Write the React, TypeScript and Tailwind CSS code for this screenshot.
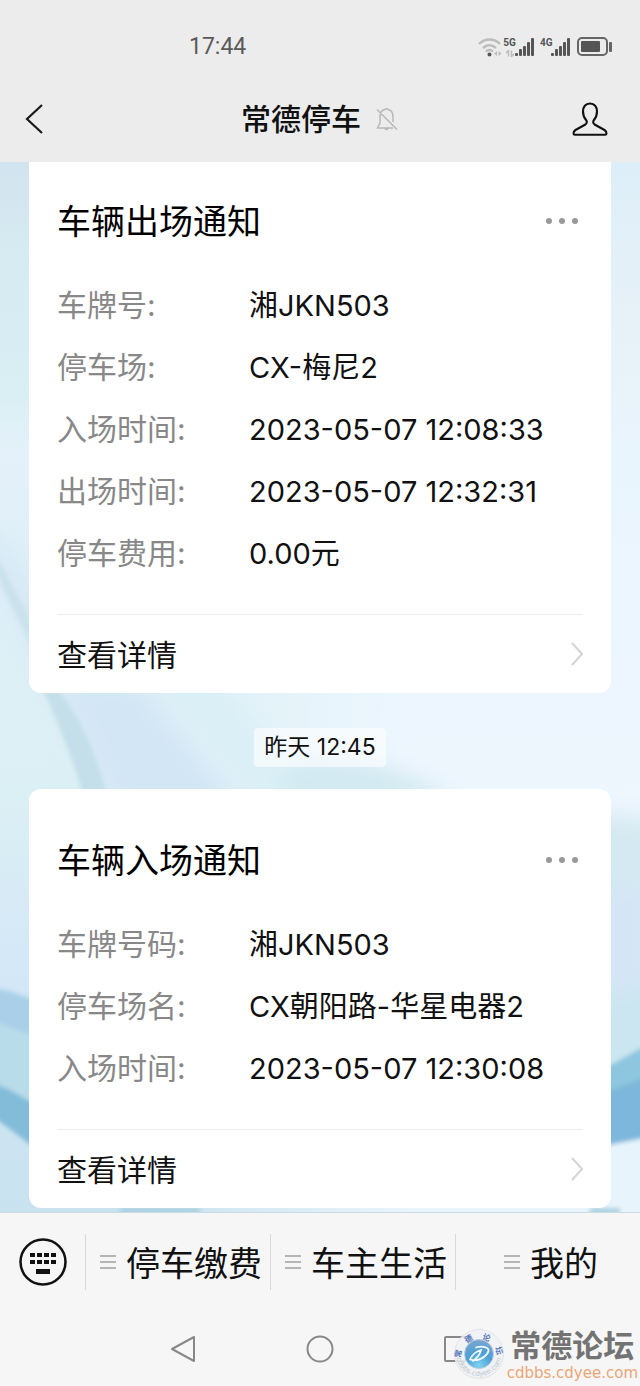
import React from 'react';

const SANS = "font-['Inter','Noto_Sans_CJK_SC',sans-serif]";

type Field = { label: string; value: string };

const exitFields: Field[] = [
    { label: '车牌号:', value: '湘JKN503' },
    { label: '停车场:', value: 'CX-梅尼2' },
    { label: '入场时间:', value: '2023-05-07 12:08:33' },
    { label: '出场时间:', value: '2023-05-07 12:32:31' },
    { label: '停车费用:', value: '0.00元' },
];

const entryFields: Field[] = [
    { label: '车牌号码:', value: '湘JKN503' },
    { label: '停车场名:', value: 'CX朝阳路-华星电器2' },
    { label: '入场时间:', value: '2023-05-07 12:30:08' },
];

const menuItems = ['停车缴费', '车主生活', '我的'];

const SignalBars: React.FC = () => (
    <svg width="19" height="18" viewBox="0 0 19 18" fill="#555">
        <rect x="0" y="15" width="3" height="3" rx="1" />
        <rect x="4" y="11" width="3" height="7" rx="1" />
        <rect x="8" y="8" width="3" height="10" rx="1" />
        <rect x="12" y="4" width="3" height="14" rx="1" />
        <rect x="16" y="0" width="3" height="18" rx="1" />
    </svg>
);

const StatusBar: React.FC = () => (
    <div className="flex h-[92px] items-center justify-between pt-0.5 pr-[27px] pl-[189px]">
        <span className="font-['Roboto',sans-serif] text-[23px] text-[#5a5a5a]">17:44</span>
        <div className="flex items-center">
            <svg width="26" height="20" viewBox="0 0 26 20" fill="none">
                <path d="M1 7c6-6 15-6 21 0M5 11c4-3.600 9-3.600 13 0M8 14.500c2.400-2 4.600-2 7 0" stroke="#bcbcbc" strokeWidth="2.400" />
                <circle cx="11.500" cy="17.500" r="2" fill="#555" />
                <path d="M19 14l-3 2.500 3 2.500zM20.500 14l3 2.500-3 2.500z" fill="#bcbcbc" />
            </svg>
            <div className="flex items-start">
                <div className="flex h-[19px] w-[11px] flex-col items-center justify-between">
                    <span className="font-['Roboto',sans-serif] text-[10px] leading-[10px] font-bold text-[#555]">5G</span>
                    <svg width="8" height="7" viewBox="0 0 8 7" stroke="#bcbcbc" fill="none">
                        <path d="M0 3l2.500-2.500V6.500M8 4L5.500 6.500V.5" strokeWidth="1.500" />
                    </svg>
                </div>
                <SignalBars />
            </div>
            <div className="ml-1.5 flex items-start">
                <span className="w-[11px] font-['Roboto',sans-serif] text-[10px] leading-[10px] font-bold text-[#555]">4G</span>
                <SignalBars />
            </div>
            <svg className="ml-[7px]" width="36" height="20" viewBox="0 0 36 20" fill="none">
                <rect x="1" y="1" width="29" height="17" rx="4" stroke="#666" strokeWidth="2" />
                <rect x="4" y="4" width="19" height="11" rx="1" fill="#555" />
                <rect x="32" y="5" width="3" height="10" rx="1" fill="#666" />
            </svg>
        </div>
    </div>
);

const TopNav: React.FC = () => (
    <div className="flex h-[70px] items-start justify-between pt-[3px] pr-8 pl-6">
        <button type="button" aria-label="返回" className="flex h-12 w-10 items-center">
            <svg width="22" height="32" viewBox="0 0 22 32" fill="none" stroke="#1a1a1a" strokeWidth="2.200">
                <path d="M18 2L3 16l15 14" />
            </svg>
        </button>
        <div className="flex h-12 items-center gap-3.5 pl-1">
            <h1 className="text-[30px] leading-10 font-medium text-[#111]">常德停车</h1>
            <svg width="24" height="26" viewBox="0 0 24 26" fill="none" stroke="#b8b8b8" strokeWidth="1.500">
                <path d="M5 18V11c0-4 2-7 5-7.500a1.600 1.600 0 0 1 3 0C16 4 18 7 18 11v5M5 17l-2.500 5H18M10 22.500a1.600 1.600 0 0 0 3 0M2 3.500l20 20" />
            </svg>
        </div>
        <button type="button" aria-label="个人资料" className="flex h-12 items-center">
            <svg width="36" height="34" viewBox="0 0 36 34" fill="none" stroke="#111" strokeWidth="2.100" strokeLinejoin="round">
                <path d="M18 1.500c-4.500 0-7 3.300-7 8 0 3.500 1.300 6.500 3.200 8.700 1 1.300.8 3.200-.8 4.300L3.500 28c-1.400.9-2.200 2-2 3.700.1.700.6 1 1.300 1h30.400c.7 0 1.200-.3 1.300-1 .2-1.700-.6-2.800-2-3.700l-9.900-5.500c-1.600-1.100-1.800-3-.8-4.300C23.700 16 25 13 25 9.500c0-4.700-2.500-8-7-8z" />
            </svg>
        </button>
    </div>
);

// Pale watercolour wallpaper behind the messages
const Wallpaper: React.FC = () => (
    <svg aria-hidden="true" className="absolute inset-0 h-full w-full" viewBox="0 0 640 1050" preserveAspectRatio="none">
        <defs>
            <linearGradient id="base" x1="0" y1="0" x2="0" y2="1">
                <stop offset="0" stopColor="#d2e4ef" />
                <stop offset="0.090" stopColor="#d6ebf2" />
                <stop offset="0.220" stopColor="#d9eff4" />
                <stop offset="0.280" stopColor="#e5f1fa" />
                <stop offset="0.380" stopColor="#deeff7" />
                <stop offset="0.600" stopColor="#dbf0f4" />
                <stop offset="0.750" stopColor="#d5e8f7" />
                <stop offset="1" stopColor="#c8e2ef" />
            </linearGradient>
            <linearGradient id="right" x1="0" y1="0" x2="0" y2="1">
                <stop offset="0" stopColor="#ddeef8" />
                <stop offset="0.150" stopColor="#e7f1f8" />
                <stop offset="0.300" stopColor="#e9f5fd" />
                <stop offset="0.600" stopColor="#eef6fe" />
                <stop offset="1" stopColor="#e9f4fc" />
            </linearGradient>
            <linearGradient id="fade" x1="0" y1="0" x2="1" y2="0">
                <stop offset="0.200" stopColor="#fff" stopOpacity="0" />
                <stop offset="0.650" stopColor="#fff" />
            </linearGradient>
            <mask id="rightMask">
                <rect width="640" height="1050" fill="url(#fade)" />
            </mask>
            <filter id="soft" x="-20%" y="-20%" width="140%" height="140%">
                <feGaussianBlur stdDeviation="11" />
            </filter>
            <filter id="edge" x="-10%" y="-10%" width="120%" height="120%">
                <feGaussianBlur stdDeviation="2" />
            </filter>
        </defs>
        <rect width="640" height="1050" fill="url(#base)" />
        <rect width="640" height="1050" fill="url(#right)" mask="url(#rightMask)" />
        <g filter="url(#soft)">
            <path d="M-20 350L30 420 80 520 220 650H110L0 420z" fill="#d6e8f5" />
            <path d="M70 520h65l120 140H130z" fill="#d3e6f5" />
            <path d="M150 510h60l130 150h-70z" fill="#daeff6" />
            <path d="M290 600c60-10 110 5 170 40H280z" fill="#d1e9f1" />
            <path d="M590 650l70 10v70H590z" fill="#d4e9f1" />
            <path d="M590 725h70v110l-70 30z" fill="#d4e6f5" />
            <path d="M590 840l70-20v80l-70 30z" fill="#cbe6f0" />
        </g>
        <g filter="url(#edge)">
            <path d="M-5 390L32 460V485L-5 410z" fill="#cbe2ec" />
            <path d="M42 525h14c22 28 38 58 50 105H82C74 600 58 560 42 525z" fill="#c4dfea" />
            <path d="M-5 826c14 2 28 8 40 12v70L-5 888z" fill="#a9d0e8" />
            <path d="M-5 860l40 14v68L-5 922z" fill="#b9dcea" />
            <path d="M-5 922c14 4 28 14 40 20v44L-5 956z" fill="#82bcd9" />
            <path d="M605 906l40-22v86l-40 10z" fill="#8ec6df" />
            <path d="M605 930l40-14v60l-40 8z" fill="#7db8dc" />
            <path d="M605 984l40-8v80h-40z" fill="#e8f4fc" />
            <path d="M120 1046h80v6h-80zM590 1046h30v6h-30z" fill="#a9cfdf" />
        </g>
    </svg>
);

const NoticeCard: React.FC<{ title: string; fields: Field[]; continued?: boolean }> = ({ title, fields, continued }) => (
    <article className={`bg-white px-7 ${continued ? 'rounded-b-xl pt-9' : 'rounded-xl pt-12'}`}>
        <div className="mb-[30px] flex h-[46px] items-center justify-between">
            <h2 className="pt-0.5 text-[34px] leading-[46px] text-black">{title}</h2>
            <button type="button" aria-label="更多" className="flex gap-[7px] pr-[5px]">
                <span className="size-1.5 rounded-full bg-[#999]" />
                <span className="size-1.5 rounded-full bg-[#999]" />
                <span className="size-1.5 rounded-full bg-[#999]" />
            </button>
        </div>
        <dl>
            {fields.map((field) => (
                <div key={field.label} className="flex h-[62px] items-center whitespace-nowrap">
                    <dt className="w-[192px] shrink-0 text-[30px] leading-10 text-[#888]">{field.label}</dt>
                    <dd className="pt-0.5 text-[29px] leading-10 text-[#111]">{field.value}</dd>
                </div>
            ))}
        </dl>
        <a href="#detail" className="mt-[30px] flex h-[79px] items-center justify-between border-t border-[#ececec] text-[30px] text-[#111]">
            <span className="pt-0.5">查看详情</span>
            <svg width="12" height="24" viewBox="0 0 12 24" fill="none" stroke="#d4d4d4" strokeWidth="2">
                <path d="M1 1l10 11L1 23" />
            </svg>
        </a>
    </article>
);

const MenuBar: React.FC = () => (
    <nav className="flex h-[98px] items-center">
        <button type="button" aria-label="键盘" className="flex w-[85px] shrink-0 justify-center">
            <svg width="48" height="48" viewBox="0 0 48 48">
                <circle cx="24" cy="24" r="22.500" fill="none" stroke="#111" strokeWidth="2.500" />
                <path
                    d="M11 15h5v4h-5zM18 15h5v4h-5zM25 15h5v4h-5zM32 15h5v4h-5zM11 22h5v4h-5zM18 22h5v4h-5zM25 22h5v4h-5zM32 22h5v4h-5zM17 31h14v5H17z"
                    fill="#111"
                />
            </svg>
        </button>
        {menuItems.map((item) => (
            <button
                key={item}
                type="button"
                className="flex h-14 flex-1 items-center justify-center gap-2.5 border-l border-[#d8d8d8] pl-1.5 text-[34px] whitespace-nowrap text-[#111]"
            >
                <svg width="16" height="16" viewBox="0 0 16 16" stroke="#b5b5b5" strokeWidth="2">
                    <path d="M0 2h16M0 8h16M0 14h16" />
                </svg>
                <span className="pt-0.5">{item}</span>
            </button>
        ))}
    </nav>
);

const SystemNav: React.FC = () => (
    <div className="flex h-[75px] items-center justify-center gap-[109px]">
        <button type="button" aria-label="后退">
            <svg width="28" height="28" viewBox="0 0 28 28" fill="none" stroke="#888" strokeWidth="2" strokeLinejoin="round">
                <path d="M25 2v24L3 14z" />
            </svg>
        </button>
        <button type="button" aria-label="主屏幕">
            <svg width="28" height="28" viewBox="0 0 28 28" fill="none" stroke="#888" strokeWidth="2">
                <circle cx="14" cy="14" r="12.500" />
            </svg>
        </button>
        <button type="button" aria-label="最近任务">
            <svg width="28" height="28" viewBox="0 0 28 28" fill="none" stroke="#888" strokeWidth="2">
                <rect x="2" y="2" width="24" height="24" rx="1" />
            </svg>
        </button>
    </div>
);

const ForumBadge: React.FC = () => (
    <div className="pointer-events-none absolute right-0.5 bottom-1 flex items-start gap-0.5">
        <svg width="52" height="52" viewBox="0 0 52 52">
            <defs>
                <radialGradient id="ball" cx="0.5" cy="0.9" r="0.9">
                    <stop offset="0" stopColor="#7fd3f0" />
                    <stop offset="0.500" stopColor="#4a9fd4" />
                    <stop offset="1" stopColor="#7fa6d0" />
                </radialGradient>
                <path id="ringTop" d="M8 31A18 18 0 0 1 44 27" />
                <path id="ringBottom" d="M3 25A23 23 0 0 0 49 25" />
            </defs>
            <circle cx="26" cy="26" r="24.500" fill="#eef1f4" fillOpacity="0.850" stroke="#e2e5e8" />
            <circle cx="26" cy="26" r="14.500" fill="url(#ball)" stroke="#b9cfdf" />
            <path
                d="M17 31.500c2-4.500 6-8 11-9.500-1 4.500-4 8-8 11M17 31.500c5 1.500 11 0 15-3.500 4-3.500 5-7 1-8.500-3-1-7-1-10 0"
                fill="none"
                stroke="#eefaff"
                strokeWidth="1.800"
                strokeLinecap="round"
            />
            <text className="font-['Noto_Sans_CJK_SC',sans-serif] text-[8px] font-bold" fill="#5475b8">
                <textPath href="#ringTop" startOffset="1">常　德　论　坛</textPath>
            </text>
            <text className="font-['DejaVu_Sans',sans-serif] text-[7px]" fill="#bcc8d2">
                <textPath href="#ringBottom" startOffset="5">cdbbs.cdyee.com</textPath>
            </text>
        </svg>
        <div className="flex flex-col items-center">
            <span className="text-[31px] leading-9 font-bold text-[#737373]">常德论坛</span>
            <span className="font-['DejaVu_Sans',sans-serif] text-[15px] leading-[18px] text-[#eba676]">cdbbs.cdyee.com</span>
        </div>
    </div>
);

export default function App() {
    return (
        <div className={`flex min-h-screen flex-col bg-[#f6f6f6] ${SANS}`}>
            <header className="bg-[#ececec]">
                <StatusBar />
                <TopNav />
            </header>

            <main className="relative flex-1 overflow-hidden">
                <Wallpaper />
                <div className="relative flex flex-col px-[29px] pb-[3px]">
                    <NoticeCard title="车辆出场通知" fields={exitFields} continued />
                    <time className="mt-[35px] mb-[22px] self-center rounded-sm bg-white/60 px-2.5 py-1 text-[23px] leading-[31px] text-[#111]">
                        昨天 12:45
                    </time>
                    <NoticeCard title="车辆入场通知" fields={entryFields} />
                </div>
            </main>

            <footer className="relative border-t border-[#c9dbe3] bg-[#f6f6f6]">
                <MenuBar />
                <SystemNav />
                <ForumBadge />
            </footer>
        </div>
    );
}
